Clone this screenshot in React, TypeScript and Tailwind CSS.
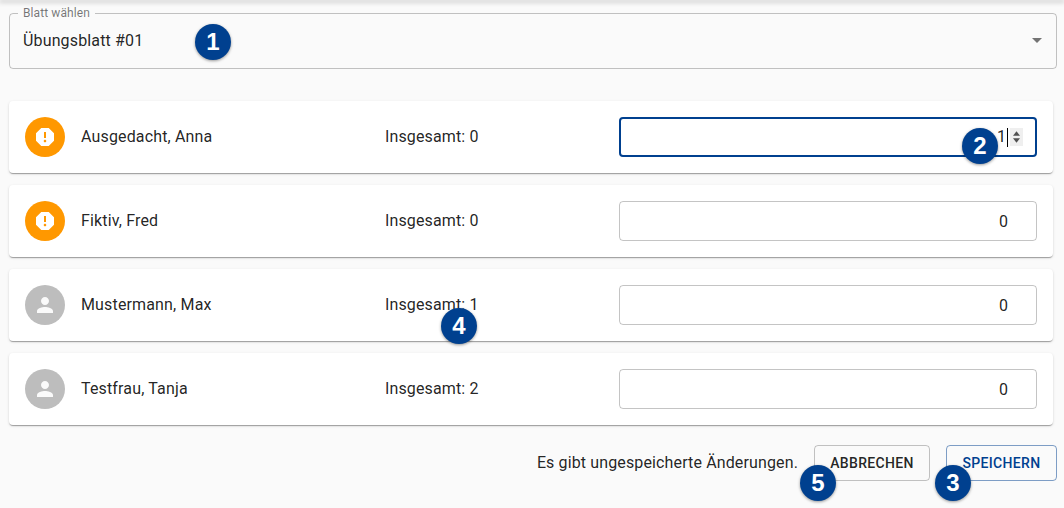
import React from "react";

const font = { fontFamily: "Roboto, sans-serif" };

function ReportIcon() {
  return (
    <svg viewBox="0 0 24 24" className="h-6 w-6" fill="#ffffff">
      <path d="M15.73 3H8.27L3 8.27v7.46L8.27 21h7.46L21 15.73V8.27L15.73 3zM12 17.3c-.72 0-1.3-.58-1.3-1.3 0-.72.58-1.3 1.3-1.3.72 0 1.3.58 1.3 1.3 0 .72-.58 1.3-1.3 1.3zm1-4.3h-2V7h2v6z" />
    </svg>
  );
}

function PersonIcon() {
  return (
    <svg viewBox="0 0 24 24" className="h-6 w-6" fill="#fafafa">
      <path d="M12 12c2.21 0 4-1.79 4-4s-1.79-4-4-4-4 1.79-4 4 1.79 4 4 4zm0 2c-2.67 0-8 1.34-8 4v2h16v-2c0-2.66-5.33-4-8-4z" />
    </svg>
  );
}

function Badge({ n, className }: { n: number; className: string }) {
  return (
    <div
      className={`absolute flex h-9 w-9 items-center justify-center rounded-full bg-[#00408f] text-[24px] font-bold leading-none text-white shadow-[0_1px_3px_rgba(0,0,0,0.4)] ${className}`}
      style={{ fontFamily: '"Liberation Sans", sans-serif' }}
    >
      {n}
    </div>
  );
}

function Row({
  name,
  total,
  warn,
  value,
  focused,
}: {
  name: string;
  total: number;
  warn?: boolean;
  value: string;
  focused?: boolean;
}) {
  return (
    <div className="flex h-[72px] w-[1044px] items-center rounded bg-white pl-4 shadow-[0_2px_1px_-1px_rgba(0,0,0,0.2),0_1px_1px_0_rgba(0,0,0,0.14),0_1px_3px_0_rgba(0,0,0,0.12)]">
      <div
        className={`flex h-10 w-10 shrink-0 items-center justify-center rounded-full ${warn ? "bg-[#ff9800]" : "bg-[#bdbdbd]"}`}
      >
        {warn ? <ReportIcon /> : <PersonIcon />}
      </div>
      <div className="ml-4 w-[304px] shrink-0 text-base tracking-[0.15px] text-black/[0.87]">{name}</div>
      <div className="w-[234px] shrink-0 text-base tracking-[0.13px] text-black/[0.87]">Insgesamt: {total}</div>
      {focused ? (
        <div className="flex h-10 w-[418px] items-center justify-end rounded border-2 border-[#00408f] pr-3 text-base text-black/[0.87]">
          <span>{value}</span>
          <span className="ml-px h-[19px] w-px bg-black" />
          <span className="ml-[2px] flex h-[18px] w-[13px] flex-col items-center justify-center gap-[2px] bg-[#efefef]">
            <svg viewBox="0 0 8 5" className="h-[5px] w-[7px]" fill="#505050">
              <path d="M4 0 8 5H0z" />
            </svg>
            <svg viewBox="0 0 8 5" className="h-[5px] w-[7px]" fill="#505050">
              <path d="M0 0h8L4 5z" />
            </svg>
          </span>
        </div>
      ) : (
        <div className="flex h-10 w-[418px] items-center justify-end rounded border border-black/[0.23] pr-7 pt-px text-base text-black/[0.87]">
          {value}
        </div>
      )}
    </div>
  );
}

export default function App() {
  return (
    <div className="relative h-[508px] w-[1064px] overflow-hidden bg-[#fafafa]" style={font}>
      <div className="h-0 w-full shadow-[0_1px_5px_1px_rgba(0,0,0,0.3)]" />
      <div className="px-[9px] pt-[7px]">
        <fieldset className="flex h-[62px] w-[1048px] items-center justify-between rounded border border-black/[0.23] pb-[6px] pl-[13px] pr-[14px]">
          <legend className="ml-[-5px] px-[5px] text-xs leading-[12px] tracking-[0.1px] text-black/[0.54]">
            Blatt wählen
          </legend>
          <span className="text-base tracking-[0.15px] text-black/[0.87]">Übungsblatt #01</span>
          <svg viewBox="0 0 10 5" className="h-[5px] w-[10px]" fill="rgba(0,0,0,0.54)">
            <path d="M0 0h10L5 5z" />
          </svg>
        </fieldset>

        <div className="mt-8 flex flex-col gap-3">
          <Row name="Ausgedacht, Anna" total={0} warn value="1" focused />
          <Row name="Fiktiv, Fred" total={0} warn value="0" />
          <Row name="Mustermann, Max" total={1} value="0" />
          <Row name="Testfrau, Tanja" total={2} value="0" />
        </div>

        <div className="mt-5 flex w-[1048px] items-center justify-end">
          <span className="mr-4 text-base tracking-[0.13px] text-black/[0.87]">Es gibt ungespeicherte Änderungen.</span>
          <button className="h-9 w-[116px] rounded border border-black/[0.23] text-sm font-medium tracking-[0.35px] text-black/[0.87]">
            ABBRECHEN
          </button>
          <button className="ml-4 h-9 w-[111px] rounded border border-[#00408f]/50 text-sm font-medium tracking-[0.35px] text-[#00408f]">
            SPEICHERN
          </button>
        </div>
      </div>

      <Badge n={1} className="left-[195px] top-[24px]" />
      <Badge n={2} className="left-[962px] top-[128px]" />
      <Badge n={3} className="left-[935px] top-[465px]" />
      <Badge n={4} className="left-[441px] top-[308px]" />
      <Badge n={5} className="left-[800px] top-[465px]" />
    </div>
  );
}
